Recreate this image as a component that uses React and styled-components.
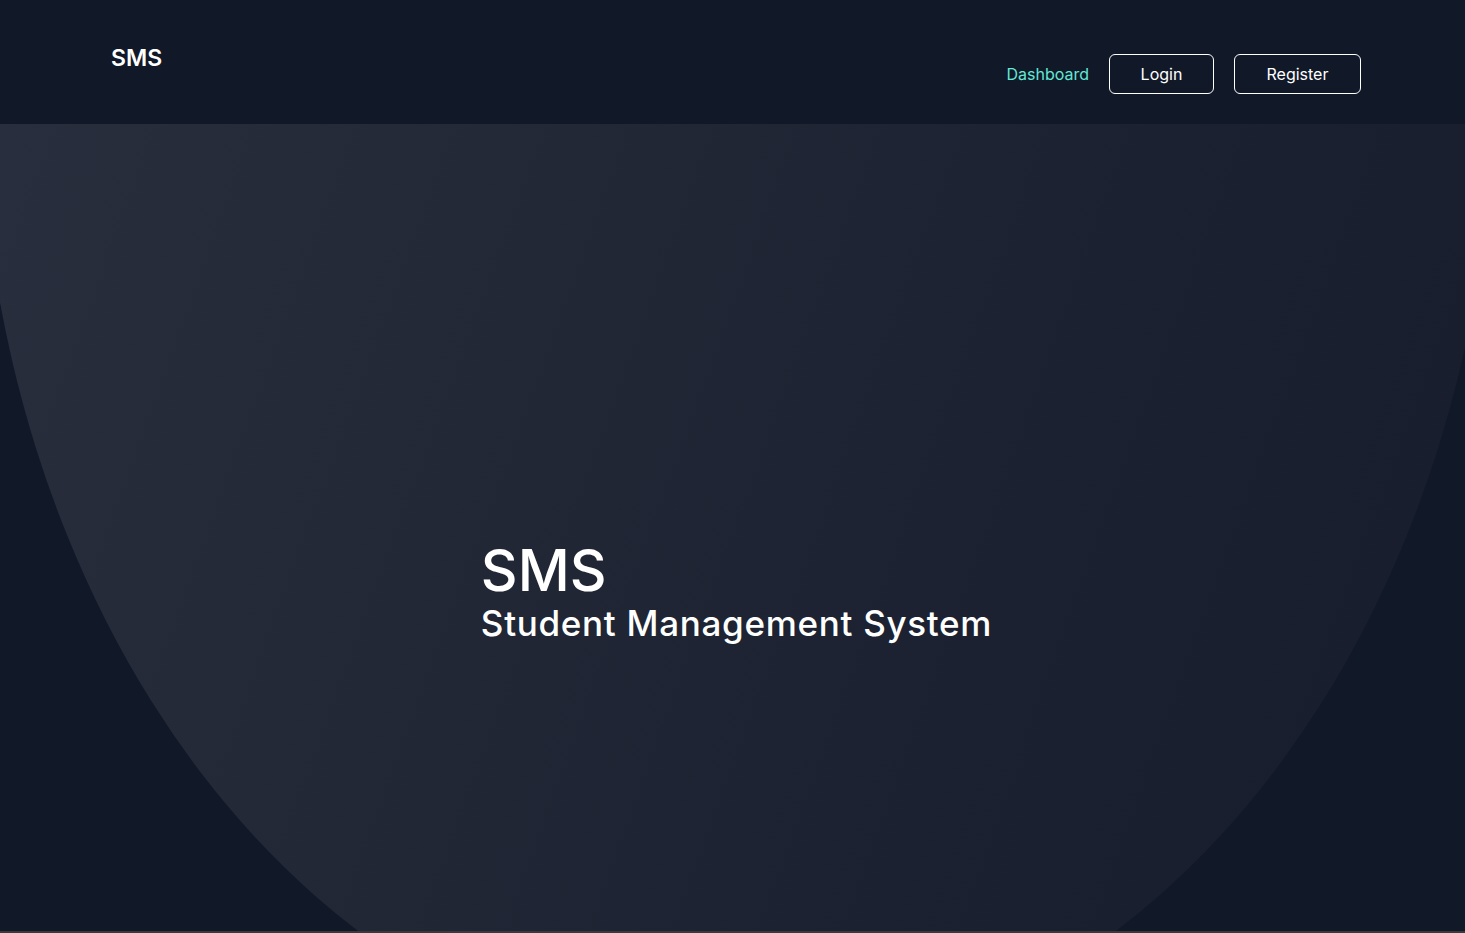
import React from "react";
import styled, { createGlobalStyle } from "styled-components";

const GlobalStyle = createGlobalStyle`
  html, body {
    margin: 0;
    padding: 0;
    background: #111827;
    font-family: "Inter", "Lato", sans-serif;
    overflow: hidden;
  }
`;

const Page = styled.div`
  height: 933px;
  display: flex;
  flex-direction: column;
  background: #111827;
`;

const Navbar = styled.nav`
  height: 124px;
  flex-shrink: 0;
  display: flex;
  justify-content: space-between;
  align-items: flex-start;
  padding: 0 104px 0 111px;
  box-sizing: border-box;
  background: #111827;
`;

const Logo = styled.div`
  margin-top: 44px;
  color: #ffffff;
  font-size: 23px;
  font-weight: 600;
  line-height: 28px;
`;

const NavLinks = styled.div`
  margin-top: 54px;
  display: flex;
  align-items: center;
  gap: 20px;
`;

const NavLink = styled.a`
  color: #62e8d6;
  font-size: 16px;
  text-decoration: none;
`;

const OutlineButton = styled.button`
  height: 40px;
  width: ${(p) => p.$width}px;
  background: transparent;
  border: 1px solid #ffffff;
  border-radius: 6px;
  color: #ffffff;
  font-family: inherit;
  font-size: 16px;
  cursor: pointer;
`;

const Hero = styled.section`
  position: relative;
  flex: 1;
  overflow: hidden;
  display: flex;
  justify-content: center;
  align-items: flex-start;
  padding-top: 415px;
  box-sizing: border-box;
  border-bottom: 2px solid #3a3a3a;

  &::before {
    content: "";
    position: absolute;
    left: -21px;
    top: -1048px;
    width: 1516px;
    height: 1988px;
    border-radius: 50%;
    background: linear-gradient(110deg, #2c3241 0%, #232937 40%, #1b2130 70%, #161c2b 100%);
  }
`;

const HeroText = styled.div`
  position: relative;
  margin-left: 8px;
  color: #ffffff;
`;

const Title = styled.h1`
  margin: 0;
  font-size: 57px;
  font-weight: 500;
  line-height: 64px;
`;

const Subtitle = styled.h2`
  margin: 0;
  font-size: 35px;
  font-weight: 500;
  line-height: 40px;
  letter-spacing: 0.7px;
`;

const App = () => {
  return (
    <Page>
      <GlobalStyle />
      <Navbar>
        <Logo>SMS</Logo>
        <NavLinks>
          <NavLink href="#">Dashboard</NavLink>
          <OutlineButton $width={105}>Login</OutlineButton>
          <OutlineButton $width={127}>Register</OutlineButton>
        </NavLinks>
      </Navbar>
      <Hero>
        <HeroText>
          <Title>SMS</Title>
          <Subtitle>Student Management System</Subtitle>
        </HeroText>
      </Hero>
    </Page>
  );
};

export default App;
